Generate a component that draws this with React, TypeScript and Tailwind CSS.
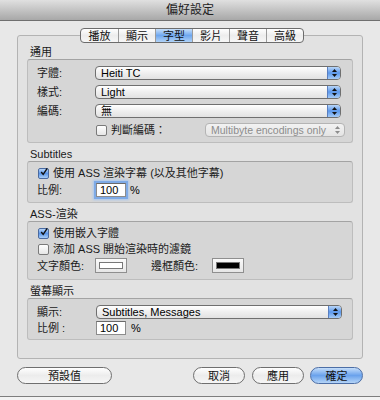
import React from "react";

const Arrows: React.FC<{ color?: string }> = ({ color = "#111" }) => (
  <svg width="5" height="8" viewBox="0 0 5 8">
    <path d="M2.5 0 L5 3 L0 3 Z" fill={color} />
    <path d="M0 5 L5 5 L2.5 8 Z" fill={color} />
  </svg>
);

const Popup: React.FC<{ value: string; className?: string; disabled?: boolean }> = ({
  value,
  className = "",
  disabled = false,
}) => (
  <div
    className={`flex h-[14px] items-center overflow-hidden rounded-[4px] border ${
      disabled
        ? "border-[#b4b4b4] bg-gradient-to-b from-[#f2f2f2] to-[#e4e4e4] text-[#8c8c8c]"
        : "border-[#6f6f6f] bg-gradient-to-b from-white via-[#efefef] to-[#e2e2e2] text-black"
    } ${className}`}
  >
    <span
      className={`flex-1 overflow-hidden whitespace-nowrap pl-[5px] leading-[12px] ${
        disabled ? "text-[10.5px]" : "text-[11px]"
      }`}
    >
      {value}
    </span>
    <div
      className={`flex h-full w-[13px] shrink-0 items-center justify-center ${
        disabled
          ? "bg-transparent"
          : "border-l border-[#5a7fc0] bg-gradient-to-b from-[#b9d6f8] via-[#5b97ea] to-[#a5cbf6]"
      }`}
    >
      <Arrows color={disabled ? "#8c8c8c" : "#111"} />
    </div>
  </div>
);

const Checkbox: React.FC<{ checked?: boolean }> = ({ checked = false }) => (
  <div
    className={`flex h-[11px] w-[11px] shrink-0 items-center justify-center rounded-[2px] border ${
      checked
        ? "border-[#4a6aa0] bg-gradient-to-b from-[#b8d5f8] via-[#5a95e8] to-[#a9cdf6]"
        : "border-[#7a7a7a] bg-gradient-to-b from-white to-[#e6e6e6]"
    }`}
  >
    {checked && (
      <svg width="10" height="10" viewBox="0 0 10 10" className="-mt-[2px] ml-[1px]">
        <path d="M1.5 5 L4 8 L9 0.5" stroke="#111" strokeWidth="1.8" fill="none" />
      </svg>
    )}
  </div>
);

const NumberField: React.FC<{ focused?: boolean }> = ({ focused = false }) => (
  <div
    className={`flex h-[14px] w-[30px] items-center border border-[#8c8c8c] border-t-[#6a6a6a] bg-white pl-[3px] text-[11px] leading-[12px] ${
      focused ? "shadow-[0_0_0_2px_#7eaae6,0_0_2px_3px_#a9c8ef]" : ""
    }`}
  >
    100
  </div>
);

const ColorWell: React.FC<{ color: string }> = ({ color }) => (
  <div className="flex h-[15px] w-[32px] items-center justify-center border border-[#8f8f8f] bg-gradient-to-b from-[#fafafa] to-[#e6e6e6]">
    <div className="h-[7px] w-[24px] border border-[#777]" style={{ backgroundColor: color }} />
  </div>
);

const Section: React.FC<{ title: string; className: string; children: React.ReactNode; first?: boolean }> = ({
  title,
  className,
  children,
  first = false,
}) => (
  <div>
    <div className={`h-[13px] pl-[3px] text-[11px] leading-[13px] text-[#1a1a1a] ${first ? "" : "mt-[5px]"}`}>
      {title}
    </div>
    <div
      className={`flex w-[326px] flex-col rounded-[3px] border border-[#bdbdbd] border-t-[#a3a3a3] bg-[#d6d6d6] pl-[9px] ${className}`}
    >
      {children}
    </div>
  </div>
);

const Label: React.FC<{ children: React.ReactNode; className?: string }> = ({ children, className = "w-[58px]" }) => (
  <span className={`shrink-0 text-[11px] leading-[12px] text-[#1a1a1a] ${className}`}>{children}</span>
);

const Button: React.FC<{ label: string; className: string; primary?: boolean }> = ({ label, className, primary }) => (
  <div
    className={`flex h-[17px] items-center justify-center rounded-full border text-[11px] leading-[12px] text-[#111] ${
      primary
        ? "border-[#4c6ea6] bg-gradient-to-b from-[#c4ddf9] via-[#6aa2ec] to-[#b4d4f7]"
        : "border-[#6f6f6f] bg-gradient-to-b from-white via-[#ececec] to-[#f6f6f6]"
    } ${className}`}
  >
    {label}
  </div>
);

const tabs = ["播放", "顯示", "字型", "影片", "聲音", "高級"];

export default function App() {
  return (
    <div className="h-[400px] w-[380px] bg-[#f2f2f2] font-['Liberation_Sans','Noto_Sans_CJK_TC',sans-serif]">
      <div className="flex h-[397px] flex-col border-b border-[#7d7d7d] bg-[#e8e8e8]">
        <div className="flex h-[21px] items-center justify-center border-b border-[#6f6f6f] bg-gradient-to-b from-[#e0e0e0] to-[#a8a8a8] text-[12px] text-[#222]">
          偏好設定
        </div>

        <div className="px-[17px]">
          <div className="relative z-10 mt-[7px] flex justify-center pl-[4px]">
            <div className="flex h-[15px] overflow-hidden rounded-[4px] border border-[#6c6c6c] bg-gradient-to-b from-white via-[#ededed] to-[#f7f7f7]">
              {tabs.map((t, i) => (
                <div
                  key={t}
                  className={`flex w-[37px] items-center justify-center text-[11px] leading-[12px] text-[#111] ${
                    i > 0 ? "border-l border-[#9b9b9b]" : ""
                  } ${t === "字型" ? "bg-gradient-to-b from-[#c8e0fa] via-[#6fa7ee] to-[#b0d2f7]" : ""}`}
                >
                  {t}
                </div>
              ))}
            </div>
          </div>

          <div className="-mt-[8px] h-[324px] rounded-[3px] border border-[#b3b3b3] bg-[#e2e2e2] px-[9px] pt-[10px]">
            <Section title="通用" className="h-[84px] gap-[5px] pt-[6px]" first>
              <div className="flex items-center">
                <Label>字體:</Label>
                <Popup value="Heiti TC" className="w-[246px]" />
              </div>
              <div className="flex items-center">
                <Label>樣式:</Label>
                <Popup value="Light" className="w-[246px]" />
              </div>
              <div className="flex items-center">
                <Label>編碼:</Label>
                <Popup value="無" className="w-[246px]" />
              </div>
              <div className="flex items-center">
                <div className="w-[59px]" />
                <Checkbox />
                <span className="ml-[4px] w-[94px] text-[11px] leading-[12px] text-[#1a1a1a]">判斷編碼：</span>
                <Popup value="Multibyte encodings only" className="w-[140px]" disabled />
              </div>
            </Section>

            <Section title="Subtitles" className="h-[42px] gap-[4px] pt-[5px]">
              <div className="flex h-[12px] items-center gap-[4px] pl-[1px]">
                <Checkbox checked />
                <span className="text-[11px] leading-[12px] text-[#1a1a1a]">使用 ASS 渲染字幕 (以及其他字幕)</span>
              </div>
              <div className="flex items-center">
                <Label className="w-[59px]">比例:</Label>
                <NumberField focused />
                <span className="ml-[4px] text-[11px] leading-[12px]">%</span>
              </div>
            </Section>

            <Section title="ASS-渲染" className="h-[59px] gap-[4px] pt-[5px]">
              <div className="flex h-[12px] items-center gap-[4px] pl-[1px]">
                <Checkbox checked />
                <span className="text-[11px] leading-[12px] text-[#1a1a1a]">使用嵌入字體</span>
              </div>
              <div className="flex h-[12px] items-center gap-[4px] pl-[1px]">
                <Checkbox />
                <span className="text-[11px] leading-[12px] text-[#1a1a1a]">添加 ASS 開始渲染時的濾鏡</span>
              </div>
              <div className="-mt-[1px] flex items-center">
                <Label className="w-[58px]">文字顏色:</Label>
                <ColorWell color="#ffffff" />
                <Label className="ml-[24px] w-[61px]">邊框顏色:</Label>
                <ColorWell color="#000000" />
              </div>
            </Section>

            <Section title="螢幕顯示" className="h-[42px] gap-[2px] pt-[6px]">
              <div className="flex items-center">
                <Label className="w-[59px]">顯示:</Label>
                <Popup value="Subtitles, Messages" className="w-[246px]" />
              </div>
              <div className="flex items-center">
                <Label className="w-[59px]">比例 :</Label>
                <NumberField />
                <span className="ml-[5px] text-[11px] leading-[12px]">%</span>
              </div>
            </Section>
          </div>

          <div className="mt-[8px] flex items-center">
            <Button label="預設值" className="w-[95px]" />
            <div className="flex-1" />
            <Button label="取消" className="w-[52px]" />
            <Button label="應用" className="ml-[7px] w-[52px]" />
            <Button label="確定" className="ml-[6px] w-[53px]" primary />
          </div>
        </div>
      </div>
    </div>
  );
}
